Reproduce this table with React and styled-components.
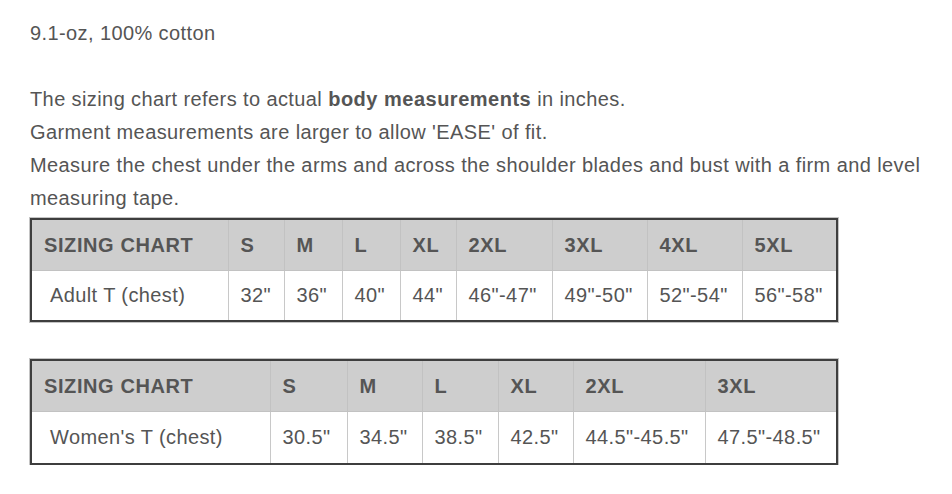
import React from 'react';
import styled, { createGlobalStyle } from 'styled-components';

const GlobalStyle = createGlobalStyle`
    body {
        margin: 0;
        background: #ffffff;
        font-family: "Liberation Sans", Arial, sans-serif;
    }
`;

const Page = styled.div`
    padding: 17px 0 0 30px;
    width: 922px;
    color: #555555;
    font-size: 20px;
    letter-spacing: 0.4px;
`;

const Line = styled.p`
    margin: 0;
    line-height: 33px;
    margin-bottom: ${(props) => props.gap || 0}px;
    white-space: nowrap;
`;

const Bold = styled.strong`
    font-weight: 700;
    letter-spacing: 0.5px;
`;

const Chart = styled.table`
    border-collapse: collapse;
    table-layout: fixed;
    border: 2px solid #3e3e3e;
    box-shadow: 0 0 0 1px #c4c4c4;
    margin-top: ${(props) => props.top}px;
    color: #555555;
`;

const HeadCell = styled.th`
    background: #cecece;
    height: 50px;
    padding: 0 0 0 12px;
    text-align: left;
    font-weight: 700;
    letter-spacing: 0.6px;
    border: 1px solid #c2c2c2;
`;

const Cell = styled.td`
    background: #ffffff;
    height: ${(props) => props.rowHeight}px;
    padding: 0 0 0 12px;
    text-align: left;
    white-space: nowrap;
    border: 1px solid #c8c8c8;
`;

const SizeChart = ({ label, sizes, values, widths, top, rowHeight }) => (
    <Chart top={top}>
        <colgroup>
            {widths.map((w, i) => (
                <col key={i} style={{ width: w }} />
            ))}
        </colgroup>
        <thead>
            <tr>
                <HeadCell>SIZING CHART</HeadCell>
                {sizes.map((s) => (
                    <HeadCell key={s}>{s}</HeadCell>
                ))}
            </tr>
        </thead>
        <tbody>
            <tr>
                <Cell rowHeight={rowHeight}>&nbsp;{label}</Cell>
                {values.map((v, i) => (
                    <Cell key={i} rowHeight={rowHeight}>{v}</Cell>
                ))}
            </tr>
        </tbody>
    </Chart>
);

const App = () => {
    return (
        <>
            <GlobalStyle />
            <Page>
                <Line gap={33}>9.1-oz, 100% cotton</Line>
                <Line>
                    The sizing chart refers to actual <Bold>body measurements</Bold> in inches.
                </Line>
                <Line>Garment measurements are larger to allow 'EASE' of fit.</Line>
                <Line>
                    Measure the chest under the arms and across the shoulder blades and bust with a firm and level
                </Line>
                <Line>measuring tape.</Line>
                <SizeChart
                    top={3}
                    rowHeight={49}
                    label="Adult T (chest)"
                    sizes={['S', 'M', 'L', 'XL', '2XL', '3XL', '4XL', '5XL']}
                    values={['32"', '36"', '40"', '44"', '46"-47"', '49"-50"', '52"-54"', '56"-58"']}
                    widths={[197, 56, 58, 58, 56, 96, 95, 95, 95]}
                />
                <SizeChart
                    top={37}
                    rowHeight={51}
                    label="Women's T (chest)"
                    sizes={['S', 'M', 'L', 'XL', '2XL', '3XL']}
                    values={['30.5"', '34.5"', '38.5"', '42.5"', '44.5"-45.5"', '47.5"-48.5"']}
                    widths={[239, 77, 75, 76, 75, 132, 132]}
                />
            </Page>
        </>
    );
};

export default App;
